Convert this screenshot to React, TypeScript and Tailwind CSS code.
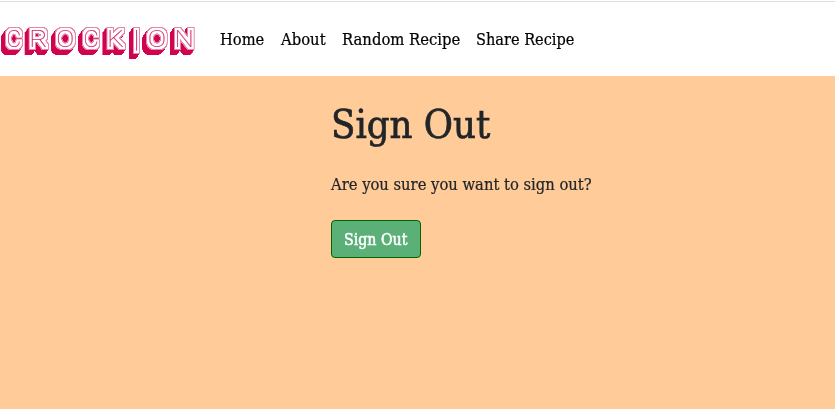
import React from 'react';

const letters = [
  { c: 'C', x: 6.4, w: 14.6 },
  { c: 'R', x: 29.2, w: 18.4 },
  { c: 'O', x: 56.2, w: 18 },
  { c: 'C', x: 83.4, w: 15.2 },
  { c: 'K', x: 107.3, w: 16.7 },
  { c: '|', x: 133.4, w: 6 },
  { c: 'O', x: 147.8, w: 18.4 },
  { c: 'N', x: 174.6, w: 19.4 },
];

const depth = [1, 2, 3, 4, 5];

function Logo() {
  return (
    <svg width="196" height="74" viewBox="0 0 196 74" className="shrink-0 font-['Roboto',sans-serif] font-thin" aria-label="CROCK|ON">
      <defs>
        <filter id="shade" filterUnits="userSpaceOnUse" x="-4" y="0" width="204" height="76" colorInterpolationFilters="sRGB">
          <feComponentTransfer in="SourceAlpha" result="solid">
            <feFuncA type="linear" slope="2.4" intercept="-0.3" />
          </feComponentTransfer>
          <feMorphology in="solid" operator="dilate" radius="3" result="outer" />
          <feMorphology in="solid" operator="dilate" radius="2" result="middle" />
          <feFlood floodColor="#cf0350" result="crimson" />
          <feFlood floodColor="#e887ab" result="pink" />
          <feFlood floodColor="#ffffff" result="white" />
          <feComposite in="crimson" in2="outer" operator="in" result="block" />
          {depth.map((n) => (
            <feOffset key={n} in="block" dx={-n * 0.8} dy={n} result={`block${n}`} />
          ))}
          <feComposite in="pink" in2="outer" operator="in" result="rim" />
          <feComposite in="white" in2="middle" operator="in" result="face" />
          <feMerge>
            <feMergeNode in="block5" />
            <feMergeNode in="block4" />
            <feMergeNode in="block3" />
            <feMergeNode in="block2" />
            <feMergeNode in="block1" />
            <feMergeNode in="rim" />
            <feMergeNode in="face" />
            <feMergeNode in="SourceGraphic" />
          </feMerge>
        </filter>
      </defs>
      <g transform="translate(0 -3)" filter="url(#shade)" fill="#d42a69" stroke="#d42a69" strokeWidth="0.2">
        {letters.map((l, i) => (
          <text key={i} x={l.x} y={47.5} textLength={l.w} lengthAdjust="spacingAndGlyphs" fontSize={24.6}>
            {l.c}
          </text>
        ))}
      </g>
    </svg>
  );
}

function Fit({ children, box, className = '' }: { children: string; box: string; className?: string }) {
  return (
    <span className={`block whitespace-nowrap ${box}`}>
      <span className={`inline-block origin-left ${className}`}>{children}</span>
    </span>
  );
}

export default function App() {
  return (
    <div className="flex h-[409px] w-[835px] flex-col overflow-hidden bg-[#ffcb99] font-['Roboto_Slab','DejaVu_Serif_Condensed','DejaVu_Serif',serif] text-base leading-6 text-[#212529]">
      <header className="flex h-[76px] shrink-0 items-center border-t border-white bg-white">
        <div className="flex h-[75px] w-full items-center border-t border-[#dedede]">
          <Logo />
          <nav className="ml-6 flex gap-4 pt-0.5 text-black [-webkit-text-stroke:0.2px]">
            <Fit box="w-[45px]" className="scale-x-[1.02]">Home</Fit>
            <Fit box="w-[45px]" className="scale-x-[1.03]">About</Fit>
            <Fit box="w-[118px]" className="scale-x-[1.03]">Random Recipe</Fit>
            <Fit box="w-[99px]" className="scale-x-[1.01]">Share Recipe</Fit>
          </nav>
        </div>
      </header>
      <main className="ml-[331px] flex flex-col items-start pt-6">
        <h1 className="text-[40px] leading-[48px] [-webkit-text-stroke:0.7px]">
          <Fit box="w-[160px]" className="scale-x-[0.99]">Sign Out</Fit>
        </h1>
        <p className="mt-[25px] [-webkit-text-stroke:0.2px]">
          <Fit box="w-[261px]" className="scale-x-[1.025]">Are you sure you want to sign out?</Fit>
        </p>
        <button className="mt-[23px] flex h-[38px] w-[90px] items-center rounded border border-[#006400] bg-[#5ab077] pl-3 pt-px text-white [-webkit-text-stroke:0.5px]">
          <Fit box="w-[65px]" className="scale-x-[0.985]">Sign Out</Fit>
        </button>
      </main>
    </div>
  );
}
